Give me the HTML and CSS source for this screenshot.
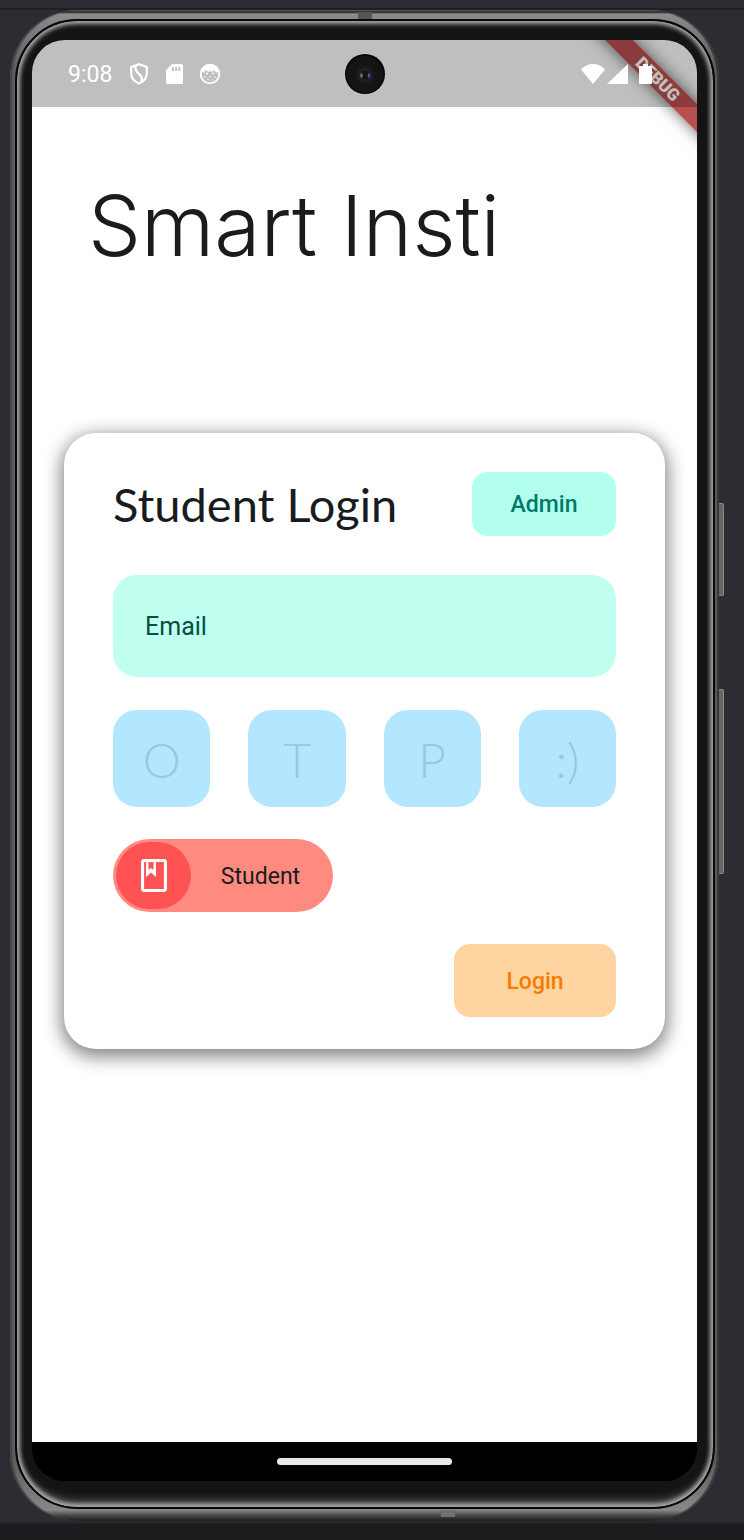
FILE: index.html
```html
<!DOCTYPE html>
<html lang="en">
<head>
<meta charset="utf-8">
<meta name="viewport" content="width=device-width, initial-scale=1">
<title>Smart Insti</title>
<link rel="stylesheet" href="styles.css">
</head>
<body>
<div class="window-top"></div>
<div class="stage">
  <div class="case">
    <span class="seam seam-top"></span>
    <span class="seam seam-bottom"></span>
    <span class="side-key side-key-power"></span>
    <span class="side-key side-key-volume"></span>
    <div class="bezel">
      <div class="screen">
        <div class="ribbon-clip"><span class="ribbon">DEBUG</span></div>
        <header class="status">
          <div class="status-left">
            <span class="clock">9:08</span>
            <svg class="icon" viewBox="0 0 22 24" aria-hidden="true"><path d="M11 2.200 3.200 5v6.500c0 4.600 3.200 8 7.800 10 4.600-2 7.800-5.400 7.800-10V5z" fill="none" stroke="#fff" stroke-width="2.200"/><path d="M7.500 4c-.6 4 .8 5.800 3.300 7.800 3 2.300 4 4.200 2.600 8" fill="none" stroke="#fff" stroke-width="2.400"/></svg>
            <svg class="icon" viewBox="0 0 22 24" aria-hidden="true"><path fill="#fff" fill-rule="evenodd" d="M8 2h9.500q1.500 0 1.500 1.500v17q0 1.500-1.500 1.500h-14Q2 22 2 20.500V8zM8 5v4h1.800V5zm3.200 0v4H13V5zm3.200 0v4h1.800V5z"/></svg>
            <svg class="icon" viewBox="0 0 22 24" aria-hidden="true"><circle cx="10" cy="12" r="9.300" fill="none" stroke="#fff" stroke-width="1.800"/><path fill="#fff" d="M1.500 9c1-5 4.500-7 8.500-7s7.500 2 8.500 7L16 11l-1.500-3-2 1.500h-5L5.500 8 4 11z"/><g fill="#fff"><circle cx="7" cy="11.500" r="1"/><circle cx="13" cy="11.500" r="1"/><circle cx="5" cy="15" r=".7"/><circle cx="10" cy="14.500" r=".8"/><circle cx="15" cy="15" r=".7"/><circle cx="8" cy="17.500" r=".7"/><circle cx="12" cy="18" r=".7"/></g></svg>
          </div>
          <svg class="camera" viewBox="0 0 40 40" aria-hidden="true"><circle cx="20" cy="20" r="20" fill="#050505"/><circle cx="20" cy="20.500" r="18.500" fill="#141415"/><circle cx="20" cy="21" r="10" fill="#19191b"/><circle cx="20" cy="21" r="7" fill="#202124"/><circle cx="20" cy="21" r="4" fill="#131417"/><ellipse cx="16.500" cy="21.500" rx="1.300" ry="2.200" fill="#53807d"/><ellipse cx="24" cy="21.500" rx="1.300" ry="2.200" fill="#3f58a8"/></svg>
          <div class="status-right">
            <svg class="wifi" viewBox="0 0 24 20" aria-hidden="true"><path fill="#fff" d="M0 5.500Q5 0 12 0t12 5.500L12 20z"/></svg>
            <svg class="signal" viewBox="0 0 21 20" aria-hidden="true"><path fill="#fff" d="M21 0v20H0z"/></svg>
            <svg class="battery" viewBox="0 0 13 20" aria-hidden="true"><path fill="#fff" d="M4 0h5v2h3q1 0 1 1v16q0 1-1 1H1q-1 0-1-1V3q0-1 1-1h3z"/></svg>
          </div>
        </header>
        <main class="app">
          <h1 class="brand">Smart Insti</h1>
          <form class="card">
            <div class="card-head">
              <h2 class="card-title">Student Login</h2>
              <button class="button button-admin" type="button">Admin</button>
            </div>
            <input class="email" type="email" placeholder="Email" aria-label="Email">
            <div class="otp">
              <input class="otp-cell" type="text" maxlength="1" placeholder="O" aria-label="Code digit 1">
              <input class="otp-cell" type="text" maxlength="1" placeholder="T" aria-label="Code digit 2">
              <input class="otp-cell" type="text" maxlength="1" placeholder="P" aria-label="Code digit 3">
              <input class="otp-cell" type="text" maxlength="1" placeholder=":)" aria-label="Code digit 4">
            </div>
            <label class="role">
              <input class="role-input" type="checkbox">
              <span class="role-knob"><svg class="book" viewBox="0 0 26 33" aria-hidden="true"><rect x="1.500" y="1.500" width="23" height="30" rx="2" fill="none" stroke="#fff" stroke-width="3.200"/><path d="M5 2v16l5-4.500 5 4.500V2h-2.500v9L10 9l-2.500 2V2z" fill="#fff"/></svg></span>
              <span class="role-name">Student</span>
            </label>
            <button class="button button-login" type="submit">Login</button>
          </form>
        </main>
        <footer class="nav"><span class="nav-handle"></span></footer>
      </div>
    </div>
  </div>
</div>
<div class="window-bottom"></div>
</body>
</html>
```
FILE: styles.css
```css
* { box-sizing: border-box; }

body {
  margin: 0;
  min-height: 100vh;
  display: flex;
  flex-direction: column;
  background: #2c2d32;
  font-family: Roboto, "Liberation Sans", sans-serif;
}

h1, h2 { margin: 0; font-weight: 400; }

.window-top { height: 10px; border-bottom: 2px solid #1f2024; }
.window-bottom { height: 18px; background: #1b1c1e; border-top: 2px solid #232427; }

.stage {
  flex: 1;
  display: flex;
  padding: 0 25px 1px 10px;
}

.case {
  position: relative;
  flex: 1;
  display: flex;
  padding: 9px 4px 12px 5px;
  border-radius: 68px;
  background: linear-gradient(to bottom, #777 0, #222 2px, #8c8c8c 4px, #888 8px, #5c5c5c 60px, #5c5c5c calc(100% - 60px), #888 calc(100% - 11px), #4c4c4c calc(100% - 6px), #1a1a1a 100%);
  box-shadow: inset 2px 0 1px #444, inset -2px 0 1px #383838;
}

.seam { position: absolute; left: 50%; width: 14px; height: 7px; background: #565656; }
.seam-top { top: 2px; margin-left: -7px; }
.seam-bottom { bottom: 4px; margin-left: 76px; background: #707070; }

.side-key {
  position: absolute;
  right: -5px;
  width: 6px;
  border: 1px solid #8a8a86;
  border-left-color: #333;
  border-radius: 2px;
  background: #666663;
}
.side-key-power { top: 493px; height: 93px; }
.side-key-volume { top: 679px; height: 185px; }

.bezel {
  flex: 1;
  display: flex;
  padding: 19px 16px 26px 15px;
  border: 2px solid #080808;
  border-radius: 62px;
  background: #141414;
  box-shadow: inset 0 0 4px 3px #acacac, inset 0 -14px 10px -8px #5c5c5c;
}

.screen {
  position: relative;
  flex: 1;
  display: flex;
  flex-direction: column;
  overflow: hidden;
  border-radius: 33px;
  background: linear-gradient(#fff calc(100% - 39px), #000 0);
}

.status {
  position: relative;
  z-index: 2;
  display: grid;
  grid-template-columns: 1fr auto 1fr;
  align-items: center;
  height: 67px;
  padding: 0 45px 0 36px;
  background: rgba(0, 0, 0, 0.25);
}
.status-left { display: flex; align-items: center; gap: 13px; }
.status-right { display: flex; align-items: center; justify-content: flex-end; }
.clock { margin-right: 3px; padding-top: 2px; color: #fff; font-size: 23px; line-height: 28px; }
.icon { width: 22px; height: 24px; }
.icon + .icon { margin-left: 1px; }
.camera { width: 40px; height: 40px; margin-left: 9px; }
.wifi { width: 24px; height: 20px; }
.signal { width: 21px; height: 20px; margin: 0 11px 0 2px; }
.battery { width: 13px; height: 20px; }

.ribbon-clip {
  position: absolute;
  top: 0;
  right: 0;
  z-index: 1;
  width: 130px;
  height: 130px;
  overflow: hidden;
}
.ribbon {
  position: absolute;
  top: 29px;
  right: -61px;
  width: 200px;
  transform: rotate(45deg);
  background: rgba(163, 20, 20, 0.75);
  box-shadow: 0 0 16px rgba(0, 0, 0, 0.6);
  color: #fff;
  font-size: 17px;
  font-weight: 900;
  line-height: 20px;
  text-align: center;
}

.app { flex: 1; padding: 0 32px; }

.brand {
  padding: 71px 24px 0;
  color: #191c1e;
  font-family: Inter, "Open Sans", sans-serif;
  font-size: 84px;
  font-weight: 300;
  line-height: 96px;
}

.card {
  display: flex;
  flex-direction: column;
  margin-top: 159px;
  padding: 39px 49px 32px;
  border-radius: 32px;
  background: #fff;
  box-shadow: 0 5px 18px 3px rgba(0, 0, 0, 0.48);
}
.card-head { display: flex; align-items: center; justify-content: space-between; }
.card-title {
  color: #191c1e;
  font-family: Lato, sans-serif;
  font-size: 47px;
  line-height: 64px;
}

.button {
  padding-top: 2px;
  border: 0;
  border-radius: 16px;
  font-family: Roboto, sans-serif;
  font-size: 23px;
  font-weight: 500;
}
.button-admin { width: 144px; height: 64px; background: #b2ffee; color: #00796b; }
.button-login { align-self: flex-end; width: 162px; height: 73px; margin-top: 32px; background: #fed5a0; color: #f57c00; }

.email {
  width: 100%;
  height: 102px;
  margin-top: 39px;
  padding: 0 32px;
  border: 0;
  border-radius: 24px;
  background: #c1fff0;
  color: #00513f;
  font-family: Roboto, sans-serif;
  font-size: 25px;
}
.email::placeholder { color: #00513f; opacity: 1; }

.otp {
  display: grid;
  grid-template-columns: repeat(4, 1fr);
  gap: 38px;
  margin-top: 33px;
}
.otp-cell {
  width: 100%;
  min-width: 0;
  height: 97px;
  padding: 2px 0 0;
  border: 0;
  border-radius: 24px;
  background: #b3e6ff;
  color: #191c1e;
  font-family: Lato, sans-serif;
  font-size: 48px;
  font-weight: 300;
  text-align: center;
}
.otp-cell::placeholder { color: #9ac8dd; opacity: 1; }

.role {
  position: relative;
  display: flex;
  align-items: center;
  align-self: flex-start;
  width: 220px;
  height: 73px;
  margin-top: 32px;
  padding: 3px;
  border-radius: 37px;
  background: #ff8a80;
}
.role-input { position: absolute; inset: 0; width: 100%; height: 100%; margin: 0; opacity: 0; }
.role-knob {
  display: flex;
  align-items: center;
  justify-content: center;
  width: 75px;
  height: 67px;
  border-radius: 34px;
  background: #ff5252;
}
.book { width: 26px; height: 33px; }
.role-name { flex: 1; padding-top: 2px; color: #191c1e; font-size: 23px; text-align: center; }

.nav {
  display: flex;
  align-items: center;
  justify-content: center;
  height: 39px;
  background: #000;
}
.nav-handle { width: 175px; height: 7px; border-radius: 4px; background: #e8e8e8; }
```
